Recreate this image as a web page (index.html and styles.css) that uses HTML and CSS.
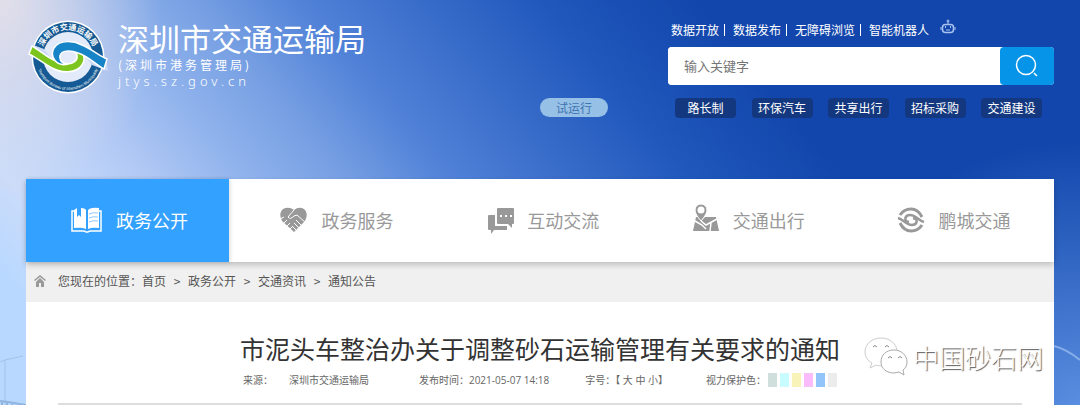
FILE: index.html
```html
<!DOCTYPE html>
<html lang="zh-CN">
<head>
	<title>深圳市交通运输局</title>
	<meta charset="utf-8">
	<link rel="stylesheet" href="styles.css">
</head>
<body>
	<svg class="lamp" width="26" height="54" viewBox="0 0 26 54" aria-hidden="true">
		<path d="M5 54V9M0 11l5-2 18-4" fill="none" stroke="#a3c3e6"/>
		<path d="M0 50l8 1 18 3M2 50v4M7 51v3M12 52v2" fill="none" stroke="#8fb4e0" stroke-width="2"/>
	</svg>
	<svg class="arc" width="26" height="24" viewBox="0 0 26 24" aria-hidden="true">
		<path d="M0 3q12 3 26 14" fill="none" stroke="#85aee8" stroke-width="2"/>
	</svg>
	<header class="header">
		<a class="brand" href="#">
			<svg class="logo" width="80" height="74" viewBox="0 0 80 74" aria-hidden="true">
				<defs>
					<path id="arcTop" d="M13 37a27 27 0 0 1 54 0"/>
					<path id="arcBottom" d="M8 38a32 32 0 0 0 64 0"/>
				</defs>
				<circle cx="40" cy="37" r="36.500" fill="#fff"/>
				<circle cx="40" cy="37" r="35" fill="#155a94"/>
				<circle cx="40" cy="37" r="25" fill="#e3ebfa"/>
				<path d="M0 23l16 6 8 10-22-4zM80 51l-16-6-8-10 22 4z" fill="#cddaf5"/>
				<text class="logo-cn"><textPath href="#arcTop" startOffset="50%" text-anchor="middle">深圳市交通运输局</textPath></text>
				<text class="logo-en"><textPath href="#arcBottom" startOffset="50%" text-anchor="middle">Transport Bureau of Shenzhen Municipality</textPath></text>
				<path d="M4 26C13 31 21 40 33 43C44 46 50 41 49 35C48 31 45 30 40 30C52 25 60 36 54 45C48 54 33 53 24 48C15 43 9 38 1 34Z" fill="#7cc51e" stroke="#fff" stroke-width="1.500"/>
				<path d="M76 49C67 44 60 36 50 33C40 29 31 31 32 38C32 41 35 44 40 44C29 47 21 37 26 28C32 19 46 21 54 25C64 29 71 36 79 39Z" fill="#1784c8" stroke="#fff" stroke-width="1.500"/>
			</svg>
			<span class="brand-text">
				<span class="brand-name">深圳市交通运输局</span>
				<span class="brand-sub">(深圳市港务管理局)</span>
				<span class="brand-url">jtys.sz.gov.cn</span>
			</span>
		</a>
		<button class="trial" type="button">试运行</button>
		<div class="tools">
			<div class="links">
				<a href="#">数据开放</a><i></i>
				<a href="#">数据发布</a><i></i>
				<a href="#">无障碍浏览</a><i></i>
				<a href="#">智能机器人</a>
				<svg class="robot" width="16" height="16" viewBox="0 0 16 16" fill="none" stroke="#a9c3f0" aria-hidden="true">
					<rect x="2.500" y="5.500" width="11" height="8" rx="3" stroke-width="1.500"/>
					<path d="M8 5V2M1 8v3M15 8v3M6 11h4"/>
					<circle cx="8" cy="2" r="1"/>
					<path d="M5 8h1M10 8h1" stroke-width="2"/>
				</svg>
			</div>
			<form class="search">
				<input type="text" aria-label="输入关键字" placeholder="输入关键字">
				<button type="button" aria-label="搜索">
					<svg width="26" height="26" viewBox="0 0 26 26" fill="none" stroke="#fff" stroke-width="1.500">
						<circle cx="12" cy="12" r="9.500"/>
						<path d="M20 20l3 3"/>
					</svg>
				</button>
			</form>
			<div class="tags">
				<a href="#">路长制</a>
				<a href="#">环保汽车</a>
				<a href="#">共享出行</a>
				<a href="#">招标采购</a>
				<a href="#">交通建设</a>
			</div>
		</div>
	</header>
	<main class="wrapper">
		<nav class="nav">
			<a class="active" href="#">
				<svg width="32" height="32" viewBox="0 0 32 32" fill="none" aria-hidden="true">
					<path d="M3 7H1v20h11q2 0 3 1h2q1-1 3-1h10V7h-2" stroke="#fff" stroke-width="1.500"/>
					<path d="M3 6l3-2v9l2-2 2 2V4q4 0 5 2v19q-4-2-12-1z" fill="#fff"/>
					<path d="M17 6q3-3 11-2v20q-7-1-11 1z" fill="#fff"/>
					<path d="M18 10q4-2 9-1M18 14q4-2 9-1M18 18q4-2 9-1" stroke="#8dcaff"/>
				</svg>
				<span>政务公开</span>
			</a>
			<a href="#">
				<svg width="32" height="32" viewBox="-3 0 32 32" fill="none" aria-hidden="true">
					<path d="M14 28L2 17Q-2 9 3 5q6-3 11 1 5-4 10-1 5 4 1 12z" fill="#999"/>
					<path d="M14 6l-6 7q2 3 6-1l3-1 9 8M0 15l4-2M3 20l4-4M6 23l4-4M9 26l4-4M16 16l6 6M14 19l5 5M12 22l4 4" stroke="#fff"/>
				</svg>
				<span>政务服务</span>
			</a>
			<a href="#">
				<svg width="32" height="32" viewBox="-6 0 32 32" fill="none" aria-hidden="true">
					<path d="M1 11h6v11h12v4H6l-3 4v-4H1q-1 0-1-1V12q0-1 1-1z" fill="#999"/>
					<path d="M10 4h15q1 0 1 1v14q0 1-1 1h-1v4l-4-4H10q-1 0-1-1V5q0-1 1-1z" fill="#999"/>
					<path d="M12 12h2M17 12h2M22 12h2" stroke="#fff" stroke-width="2"/>
				</svg>
				<span>互动交流</span>
			</a>
			<a href="#">
				<svg width="32" height="32" viewBox="-5 0 32 32" fill="none" aria-hidden="true">
					<path d="M3 13h3l2 4 4-4h11l3 14H0z" fill="#999"/>
					<path d="M8 17q-6-7-6-11a6 6 0 0 1 12 0q0 4-6 11z" fill="#999" stroke="#fff"/>
					<circle cx="8" cy="6" r="3.500" fill="#fff"/>
					<path d="M2 17l7 4 4 4M8 17l5 4 11-6M18 19l-1 8" stroke="#fff" stroke-width="1.500"/>
				</svg>
				<span>交通出行</span>
			</a>
			<a href="#">
				<svg width="32" height="32" viewBox="-4 0 32 32" fill="none" stroke="#999" aria-hidden="true">
					<path d="M3 11Q7 5 14 5t11 8M3 19q4 8 11 8t11-6" stroke-width="3"/>
					<path d="M1 14c5 1 8 7 14 7 5 0 7-6 1-7M27 18c-5-1-8-7-14-7-5 0-7 6-1 7" stroke-width="2.500"/>
				</svg>
				<span>鹏城交通</span>
			</a>
		</nav>
		<div class="crumbs">
			<svg width="12" height="12" viewBox="0 0 12 12" fill="#999" aria-hidden="true">
				<path d="M6 0l6 5-1 1-5-4-5 4-1-1z"/>
				<path d="M6 3l4 4v5H7V8H5v4H2V7z"/>
			</svg>
			<span>您现在的位置：</span>
			<a href="#">首页</a><b>&gt;</b><a href="#">政务公开</a><b>&gt;</b><a href="#">交通资讯</a><b>&gt;</b><a href="#">通知公告</a>
		</div>
		<article class="article">
			<h1>市泥头车整治办关于调整砂石运输管理有关要求的通知</h1>
			<div class="meta">
				<span class="source">来源：</span>
				<span class="office">深圳市交通运输局</span>
				<span class="time">发布时间：2021-05-07 14:18</span>
				<span class="size">字号：【 <button type="button">大</button> <button type="button">中</button> <button type="button">小</button>】</span>
				<span>视力保护色：</span>
				<span class="colors">
					<button class="c1" type="button" aria-label="青灰"></button>
					<button class="c2" type="button" aria-label="浅青"></button>
					<button class="c3" type="button" aria-label="浅黄"></button>
					<button class="c4" type="button" aria-label="粉红"></button>
					<button class="c5" type="button" aria-label="天蓝"></button>
					<button class="c6" type="button" aria-label="浅灰"></button>
				</span>
			</div>
			<div class="watermark">
				<svg width="44" height="40" viewBox="0 0 44 40" fill="#fff" stroke="#aaa" aria-hidden="true">
					<path d="M17 1C8 1 1 7 1 15c0 5 3 9 7 11l-2 5 6-3c2 1 5 1 8 0 8-1 13-7 13-13C33 7 26 1 17 1z" stroke="#ccc"/>
					<path d="M30 13c-8 0-13 5-13 12s6 11 13 11l5-1 5 3-1-5c3-2 4-5 4-8 0-7-6-12-13-12z"/>
					<path d="M9 10q2-3 4 0M21 10q2-3 4 0M24 21q2-3 4 0M34 21q2-3 4 0" fill="none" stroke="#888"/>
				</svg>
				<span>中国砂石网</span>
			</div>
		</article>
	</main>
</body>
</html>
```

FILE: styles.css
```css
*{
	padding: 0;
	margin: 0;
	box-sizing: border-box;
}
body{
	position: relative;
	min-height: 100vh;
	font: 12px/18px "Noto Sans CJK SC", sans-serif;
	color: #555;
	background:
		radial-gradient(ellipse 15% 50% at 0 0, #e2dfe9, rgba(226, 223, 233, 0)),
		radial-gradient(ellipse 25% 65% at 100% 100%, #5a8ee0, rgba(90, 142, 224, 0)),
		linear-gradient(50deg, #b9d8ff 8%, #cadcfa 14%, #bcd2f8 20%, #b0c8f4 24%, #8fb2ec 31%, #759ee2 38%, #5182d8 45%, #3d70cc 52%, #2058bc 62%, #1246ac 73%);
}
a{
	color: inherit;
	text-decoration: none;
}
button{
	border: 0;
	background: none;
	font: inherit;
	color: inherit;
	cursor: pointer;
}
.lamp{
	position: absolute;
	left: 0;
	bottom: 0;
}
.arc{
	position: absolute;
	right: 0;
	bottom: 38px;
}
/* 头部 */
.header{
	display: flex;
	height: 179px;
	padding: 20px 26px 0 28px;
	color: #fff;
}
.brand{
	display: flex;
	gap: 10px;
	margin-right: auto;
}
.logo-cn{
	font-size: 8px;
	font-weight: bold;
	fill: #fff;
}
.logo-en{
	font: 4px "Liberation Sans", sans-serif;
	fill: #fff;
}
.brand-text{
	display: flex;
	flex-direction: column;
}
.brand-name{
	font-size: 31px;
	line-height: 36px;
}
.brand-sub{
	font-size: 12px;
	line-height: 18px;
	letter-spacing: 3px;
}
.brand-url{
	font: 13px/14px "Noto Sans", sans-serif;
	font-weight: 300;
	letter-spacing: 4px;
}
.trial{
	height: 19px;
	width: 68px;
	margin: 78px 60px 0 0;
	border-radius: 10px;
	background: #97c0e6;
	color: #3e74b0;
}
.tools{
	width: 386px;
}
.links{
	display: flex;
	align-items: center;
	height: 20px;
	padding-left: 3px;
	margin-bottom: 7px;
}
.links i{
	width: 1px;
	height: 12px;
	margin: 0 8px 0 5px;
	background: #fff;
}
.robot{
	margin: -6px 0 0 11px;
}
.search{
	display: flex;
	height: 38px;
	border-radius: 4px;
	overflow: hidden;
	background: #fff;
}
.search input{
	flex: 1;
	min-width: 0;
	padding: 0 0 2px 16px;
	border: 0;
	outline: 0;
	font: 13px "Noto Sans CJK SC", sans-serif;
}
.search input::placeholder{
	color: #757575;
}
.search button{
	display: flex;
	align-items: center;
	justify-content: center;
	width: 54px;
	border-radius: 4px 0 0 4px;
	background: #0594e8;
}
.tags{
	display: flex;
	justify-content: space-between;
	padding: 13px 12px 0 7px;
}
.tags a{
	width: 61px;
	border-radius: 4px;
	background: #13387f;
	line-height: 20px;
	text-align: center;
}
/* 主体 */
.wrapper{
	margin: 0 26px;
}
.nav{
	position: relative;
	display: grid;
	grid-template-columns: repeat(5, 1fr);
	height: 83px;
	background: #fff;
	box-shadow: 0 3px 6px rgba(0, 0, 0, .2);
}
.nav a{
	display: flex;
	align-items: center;
	gap: 13px;
	padding: 0 0 2px 45px;
	font-size: 18px;
	color: #999;
}
.nav .active{
	margin-right: 3px;
	background: #32a1ff;
	color: #fff;
	box-shadow: 1px 0 4px rgba(0, 0, 0, .15);
}
.crumbs{
	display: flex;
	align-items: center;
	height: 40px;
	padding: 0 0 2px 8px;
	background: #f0f0f0;
}
.crumbs svg{
	margin-right: 12px;
}
.crumbs b{
	width: 22px;
	font-weight: 400;
	text-align: center;
}
.article{
	position: relative;
	padding: 27px 32px 0;
	background: #fff;
}
.article h1{
	font-size: 25px;
	line-height: 38px;
	font-weight: 400;
	color: #333;
	text-align: center;
}
.meta{
	display: flex;
	align-items: center;
	justify-content: center;
	height: 38px;
	padding-bottom: 10px;
	border-bottom: 2px solid #ddd;
	font: 10px/18px "Open Sans", "Noto Sans CJK SC", sans-serif;
	color: #666;
}
.source{
	margin-right: 16px;
}
.office{
	margin-right: 50px;
}
.time{
	margin-right: 36px;
}
.size{
	margin-right: 38px;
}
.colors{
	display: flex;
	gap: 3px;
	margin-left: 2px;
}
.colors button{
	width: 9px;
	height: 14px;
}
.c1{
	background: #cfdfdc;
}
.c2{
	background: #c8fcff;
}
.c3{
	background: #f8f3b8;
}
.c4{
	background: #fbbcfb;
}
.c5{
	background: #93c5fa;
}
.c6{
	background: #ececec;
}
.watermark{
	position: absolute;
	top: 35px;
	right: 11px;
	display: flex;
	align-items: center;
	gap: 5px;
	font-size: 26px;
	line-height: 40px;
	font-weight: 300;
	color: #fff;
	text-shadow: 1px 1px 1px #555;
}
```
